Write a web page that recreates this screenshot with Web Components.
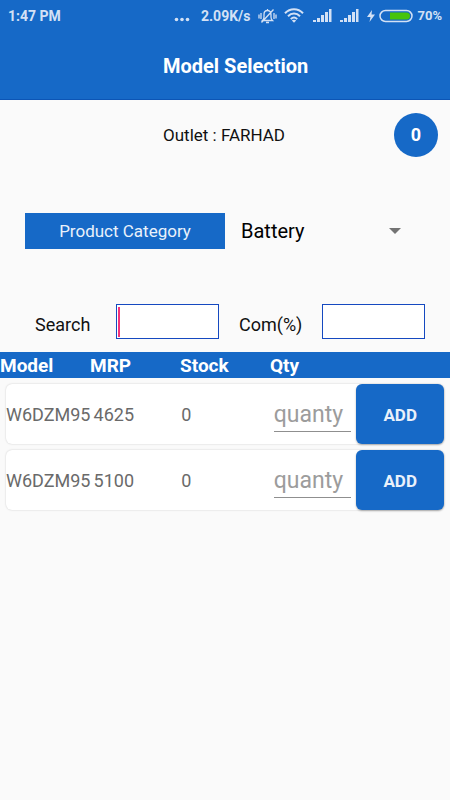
<!DOCTYPE html>
<html lang="en">
<head>
<meta charset="utf-8">
<meta name="viewport" content="width=device-width, initial-scale=1">
<title>Model Selection</title>
<style>
  :root { --blue: #1669c7; --blue-dark: #0c55b5; --page: #fafafa; }
  html { background: var(--page); }
  body { margin: 0; font-family: Roboto, "Noto Sans", sans-serif; color: #111; background: var(--page); }
</style>
</head>
<body>
<model-screen></model-screen>
<script>
function define(name, html, setup) {
  const template = document.createElement('template');
  template.innerHTML = html;
  customElements.define(name, class extends HTMLElement {
    connectedCallback() {
      if (this.shadowRoot) return;
      this.attachShadow({ mode: 'open' }).append(template.content.cloneNode(true));
      if (setup) setup(this, this.shadowRoot);
    }
  });
}

define('signal-bars', `
  <style>:host { display: block; width: 19px; height: 14px; } svg { display: block; }</style>
  <svg width="19" height="14" viewBox="0 0 19 14" fill="#d3e1f5" aria-hidden="true">
    <rect x="0" y="11" width="3" height="2"/><rect x="4" y="9" width="3" height="4"/>
    <rect x="8" y="6" width="3" height="7"/><rect x="12" y="3" width="3" height="10"/>
    <rect x="16" y="0" width="2.500" height="13"/>
  </svg>`);

define('status-bar', `
  <style>
    :host { display: flex; align-items: center; height: 32px; padding: 0 8px; background: var(--blue);
            color: #d3e1f5; font-size: 14px; font-weight: 700; line-height: 16px; }
    svg { display: block; }
    .time { margin-right: auto; }
    .dots { margin-right: 11px; }
    .mute { margin: 0 7px 0 8px; }
    .wifi { margin-right: 9px; }
    signal-bars + signal-bars { margin: 0 8px; }
    .battery { margin: 0 4px 0 4px; }
    .level { font-size: 13px; }
  </style>
  <span class="time">1:47 PM</span>
  <svg class="dots" width="16" height="16" viewBox="0 0 16 16" fill="#d3e1f5" aria-hidden="true">
    <circle cx="2.5" cy="11.5" r="1.8"/><circle cx="8" cy="11.5" r="1.8"/><circle cx="13.5" cy="11.5" r="1.8"/>
  </svg>
  <span>2.09K/s</span>
  <svg class="mute" width="19" height="16" viewBox="0 0 19 16" fill="none" stroke="#d3e1f5" stroke-width="1.300" aria-hidden="true">
    <path d="M4.500 12.500h10c-1.100-1-1.500-2-1.500-3.500V6.500C13 4 11.500 2.500 9.500 2.500S6 4 6 6.500V9c0 1.500-.4 2.500-1.500 3.500zM8 14.500h3M9.500 1v1.500M3 5v6M1 6.500v4M16 5v6M18 6.500v4M3.500 14.500L15.500 1.500"/>
  </svg>
  <svg class="wifi" width="20" height="16" viewBox="0 0 20 16" fill="none" stroke="#d3e1f5" stroke-width="2" aria-hidden="true">
    <path d="M1 5.200C6-.2 14-.2 19 5.200M4 8.300c3.500-3.600 8.500-3.600 12 0M6.800 11.100c1.900-1.900 4.500-1.900 6.400 0"/>
    <path d="M7.800 12.400l2.200 2.300 2.200-2.300c-1.200-1-3.200-1-4.400 0z" fill="#d3e1f5" stroke="none"/>
  </svg>
  <signal-bars></signal-bars><signal-bars></signal-bars>
  <svg width="8" height="14" viewBox="0 0 8 14" fill="#d3e1f5" aria-hidden="true"><path d="M5 1L0 8h3.500L2.500 13 8 5.500H4.500z"/></svg>
  <svg class="battery" width="34" height="14" viewBox="0 0 34 14" aria-hidden="true">
    <rect x="1" y="1.500" width="32" height="11" rx="5.500" fill="none" stroke="#d3e1f5" stroke-width="1.500"/>
    <path d="M11 3.500h16.500a3.500 3.500 0 0 1 0 7H11z" fill="#46c40c"/>
  </svg>
  <span class="level">70%</span>`);

define('app-bar', `
  <style>
    :host { display: flex; align-items: center; height: 67px; padding-left: 163px;
            background: var(--blue); border-bottom: 1px solid var(--blue-dark); }
    h1 { margin: 0; color: #fff; font-size: 20px; line-height: 24px; font-weight: 700; }
  </style>
  <h1><slot></slot></h1>`);

define('outlet-row', `
  <style>
    :host { display: flex; align-items: center; justify-content: space-between; padding: 13px 12px 0 163px;
            font-size: 17px; line-height: 24px; }
    .count { display: grid; place-items: center; width: 44px; height: 44px; border-radius: 50%;
             background: var(--blue); color: #fff; font-size: 18px; font-weight: 700; }
  </style>
  <span><slot></slot></span><span class="count"><slot name="count"></slot></span>`);

define('category-picker', `
  <style>
    :host { display: grid; grid-template-columns: 1fr 1fr; align-items: center; padding: 56px 25px 0; }
    label { background: var(--blue); color: #e9f1fb; text-align: center; font-size: 17px; line-height: 36px; }
    .wrap { display: grid; grid-template-columns: 1fr auto; align-items: center; padding: 0 24px 0 16px; }
    select { grid-area: 1 / 1 / 2 / 3; appearance: none; border: 0; margin: 0; padding: 0; background: none;
             font: 20px/36px Roboto, sans-serif; color: #000; outline: 0; height: 36px; }
    svg { grid-area: 1 / 2; pointer-events: none; }
  </style>
  <label for="category">Product Category</label>
  <div class="wrap">
    <select id="category"><option>Battery</option></select>
    <svg width="12" height="6" viewBox="0 0 12 6" fill="#737373" aria-hidden="true"><path d="M0 0h12L6 6z"/></svg>
  </div>`);

define('boxed-field', `
  <style>
    :host { display: flex; align-items: center; justify-content: space-between; font-size: 18px; line-height: 24px; }
    label { padding-top: 6px; }
    .box { position: relative; width: 103px; }
    input { display: block; box-sizing: border-box; width: 100%; height: 35px; margin: 0; padding: 0 6px;
            border: 1px solid #1549c0; border-radius: 0; background: #fff; font: inherit; outline: 0; }
    :host([active]) .box::after { content: ""; position: absolute; left: 2px; top: 3px; bottom: 2px; width: 2px; background: #f5337a; }
  </style>
  <label for="field"></label><div class="box"><input id="field" type="text"></div>`,
  (host, root) => { root.querySelector('label').textContent = host.getAttribute('label'); });

define('filter-row', `
  <style>:host { display: grid; grid-template-columns: 184px 186px; justify-content: space-between;
                 column-gap: 20px; padding: 55px 25px 0 35px; }</style>
  <slot></slot>`);

define('quantity-field', `
  <style>
    :host { display: block; padding: 0 5px; }
    input { display: block; box-sizing: border-box; width: 100%; height: 34px; margin: 0; padding: 0; border: 0;
            border-bottom: 1px solid #8f8f8f; border-radius: 0; background: none;
            font: 23px/32px Roboto, sans-serif; color: #333; outline: 0; }
    input::placeholder { color: #9c9c9c; opacity: 1; }
  </style>
  <input type="text" placeholder="quanty" aria-label="Quantity">`);

define('add-button', `
  <style>
    :host { display: block; }
    button { display: block; box-sizing: border-box; width: 100%; height: 60px; margin: 0; padding: 2px 0 0; border: 0; border-radius: 6px;
             background: var(--blue); color: #e9f1fb; font: 700 17px/24px Roboto, sans-serif;
             box-shadow: 0 1px 2px rgba(0,0,0,.3); }
  </style>
  <button type="button"><slot></slot></button>`);

define('model-table', `
  <style>
    :host { display: block; padding-top: 13px; }
    table, thead, tbody { display: block; }
    tr { display: grid; grid-template-columns: repeat(5, 1fr); align-items: center; }
    th, td { padding: 2px 0 0; text-align: left; white-space: nowrap; min-width: 0; }
    thead tr { background: var(--blue); color: #fff; }
    th { font-size: 19px; line-height: 24px; font-weight: 700; }
    tbody { display: grid; gap: 6px; padding: 6px; }
    tbody tr { height: 60px; border-radius: 6px; background: #fff; box-shadow: 0 0 2px rgba(0,0,0,.2); }
    td { font-size: 18px; line-height: 24px; color: #6a6a6a; }
    td:last-child { padding: 0; }
  </style>
  <table>
    <thead><tr><th scope="col">Model</th><th scope="col">MRP</th><th scope="col">Stock</th><th scope="col">Qty</th></tr></thead>
    <tbody></tbody>
  </table>`,
  (host, root) => {
    const body = root.querySelector('tbody');
    for (const values of [['W6DZM95', '4625', '0'], ['W6DZM95', '5100', '0']]) {
      const row = body.insertRow();
      for (const value of values) row.insertCell().textContent = value;
      row.insertCell().append(document.createElement('quantity-field'));
      const add = document.createElement('add-button');
      add.textContent = 'ADD';
      row.insertCell().append(add);
    }
  });

define('model-screen', `
  <style>:host { display: block; } main { display: block; }</style>
  <status-bar></status-bar>
  <app-bar>Model Selection</app-bar>
  <main>
    <outlet-row>Outlet : FARHAD<span slot="count">0</span></outlet-row>
    <category-picker></category-picker>
    <filter-row>
      <boxed-field label="Search" active></boxed-field>
      <boxed-field label="Com(%)"></boxed-field>
    </filter-row>
    <model-table></model-table>
  </main>`);
</script>
</body>
</html>
